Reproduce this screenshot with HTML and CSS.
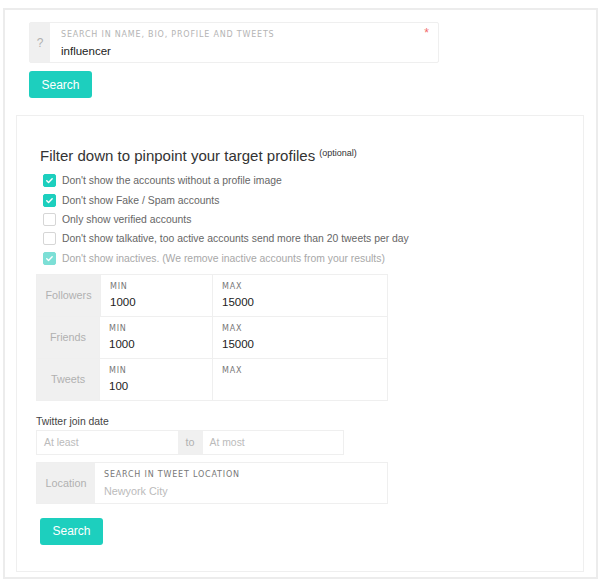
FILE: index.html
```html
<!DOCTYPE html>
<html>
<head>
<meta charset="utf-8">
<link rel="stylesheet" href="styles.css">
</head>
<body>
<div class="page">
  <div class="top">
    <div class="search-group">
      <div class="addon q">?</div>
      <div class="field">
        <div class="cap-label">SEARCH IN NAME, BIO, PROFILE AND TWEETS</div>
        <div class="value">influencer</div>
        <span class="req">*</span>
      </div>
    </div>
    <button class="btn">Search</button>
  </div>

  <div class="panel">
    <h2 class="heading">Filter down to pinpoint your target profiles <sup>(optional)</sup></h2>
    <ul class="checks">
      <li><span class="cb on"><svg viewBox="0 0 14 14"><path d="M3.5 7.2l2.3 2.3 4.6-4.8" /></svg></span>Don't show the accounts without a profile image</li>
      <li><span class="cb on"><svg viewBox="0 0 14 14"><path d="M3.5 7.2l2.3 2.3 4.6-4.8" /></svg></span>Don't show Fake / Spam accounts</li>
      <li><span class="cb"></span>Only show verified accounts</li>
      <li><span class="cb"></span>Don't show talkative, too active accounts send more than 20 tweets per day</li>
      <li class="dis"><span class="cb on"><svg viewBox="0 0 14 14"><path d="M3.5 7.2l2.3 2.3 4.6-4.8" /></svg></span>Don't show inactives. (We remove inactive accounts from your results)</li>
    </ul>

    <div class="range-table">
      <div class="range-row">
        <div class="rlabel wide">Followers</div>
        <div class="rcell min"><div class="cap-label dark">MIN</div><div class="value">1000</div></div>
        <div class="rcell max"><div class="cap-label dark">MAX</div><div class="value">15000</div></div>
      </div>
      <div class="range-row">
        <div class="rlabel">Friends</div>
        <div class="rcell min"><div class="cap-label dark">MIN</div><div class="value">1000</div></div>
        <div class="rcell max"><div class="cap-label dark">MAX</div><div class="value">15000</div></div>
      </div>
      <div class="range-row">
        <div class="rlabel">Tweets</div>
        <div class="rcell min"><div class="cap-label dark">MIN</div><div class="value">100</div></div>
        <div class="rcell max"><div class="cap-label dark">MAX</div><div class="value"></div></div>
      </div>
    </div>

    <div class="join-label">Twitter join date</div>
    <div class="date-group">
      <div class="dinput first">At least</div>
      <div class="addon to">to</div>
      <div class="dinput">At most</div>
    </div>

    <div class="loc-group">
      <div class="addon loc">Location</div>
      <div class="loc-field">
        <div class="cap-label darker">SEARCH IN TWEET LOCATION</div>
        <div class="placeholder">Newyork City</div>
      </div>
    </div>

    <button class="btn btn2">Search</button>
  </div>
</div>
</body>
</html>
```

FILE: styles.css
```css
* { box-sizing: border-box; }
html, body { margin: 0; padding: 0; background: #fff; }
body { font-family: "Liberation Sans", Arial, sans-serif; color: #333; }

.page {
  width: 595px;
  height: 571px;
  margin: 8px 0 0 3px;
  border: 2px solid #ececec;
  padding: 12px 11px 0 11px;
}

.top { margin-left: 13px; }

.search-group {
  display: flex;
  width: 410px;
  height: 41px;
  border: 1px solid #efefef;
  border-radius: 2px;
}
.addon {
  background: #f0f0f0;
  color: #b0b0b0;
  display: flex;
  align-items: center;
  justify-content: center;
}
.q { width: 20px; font-size: 12px; }
.field {
  position: relative;
  flex: 1;
  padding: 7px 0 0 11px;
}
.cap-label {
  font-family: "DejaVu Sans", sans-serif;
  font-size: 8px;
  letter-spacing: 0.8px;
  color: #b4b4b4;
  line-height: 10px;
}
.cap-label.dark { color: #777; }
.cap-label.darker { color: #777; }
.value {
  font-size: 11.5px;
  color: #222;
  line-height: 14px;
  margin-top: 4px;
}
.req {
  position: absolute;
  right: 9px;
  top: 3px;
  color: #f26b6b;
  font-size: 12px;
}

.btn {
  display: block;
  border: 0;
  background: #1dcfbe;
  color: #fff;
  font-family: "Liberation Sans", Arial, sans-serif;
  font-size: 12px;
  width: 63px;
  height: 27px;
  border-radius: 3px;
  padding: 0;
  margin-top: 8px;
}

.panel {
  margin-top: 17px;
  width: 568px;
  height: 457px;
  border: 1px solid #efefef;
  padding: 31px 0 0 19px;
}
.heading {
  font-weight: normal;
  font-size: 15px;
  color: #333;
  margin: 0 0 0 4px;
  line-height: 17px;
}
.heading sup {
  font-size: 9px;
  vertical-align: 0;
  position: relative;
  top: -5px;
}

.checks {
  list-style: none;
  margin: 4px 0 0 7px;
  padding: 0;
}
.checks li {
  display: flex;
  align-items: center;
  height: 19.4px;
  font-size: 10.4px;
  color: #666;
}
.checks li.dis { color: #a8a8a8; }
.cb {
  width: 13px;
  height: 13px;
  border: 1px solid #d6d6d6;
  border-radius: 2px;
  margin-right: 6px;
  flex: none;
  display: flex;
}
.cb.on { background: #1dcfbe; border-color: #1dcfbe; }
.dis .cb.on { background: #7ddfd6; border-color: #7ddfd6; }
.cb svg { width: 11px; height: 11px; }
.cb path { fill: none; stroke: #fff; stroke-width: 1.8; stroke-linecap: round; stroke-linejoin: round; }

.range-table {
  margin-top: 6px;
  width: 352px;
  border: 1px solid #efefef;
}
.range-row {
  display: flex;
  height: 41px;
}
.range-row + .range-row { border-top: 1px solid #efefef; height: 42px; }
.rlabel {
  width: 62px;
  background: #f0f0f0;
  color: #b0b0b0;
  font-size: 10.8px;
  display: flex;
  align-items: center;
  justify-content: center;
}
.rlabel.wide { width: 63px; }
.rcell {
  padding: 7px 0 0 9px;
  border-left: 1px solid #efefef;
}
.rcell.min { width: 113px; }
.range-row:first-child .rcell.min { width: 112px; }
.rcell.max { flex: 1; }
.rcell .value { margin-top: 3px; }

.join-label {
  margin-top: 14px;
  font-size: 10.4px;
  color: #444;
  line-height: 13px;
}
.date-group {
  margin-top: 2px;
  display: flex;
  width: 308px;
  height: 25px;
  border: 1px solid #efefef;
}
.dinput {
  flex: 1;
  font-size: 10.4px;
  color: #bbb;
  padding-left: 7px;
  display: flex;
  align-items: center;
}
.to { width: 25px; font-size: 10.8px; }

.loc-group {
  margin-top: 7px;
  display: flex;
  width: 352px;
  height: 42px;
  border: 1px solid #efefef;
}
.loc { width: 58px; font-size: 10.8px; }
.loc-field {
  flex: 1;
  padding: 7px 0 0 9px;
}
.placeholder {
  font-size: 10.8px;
  color: #bbb;
  margin-top: 4px;
  line-height: 14px;
}
.btn2 { margin: 14px 0 0 4px; }
```
